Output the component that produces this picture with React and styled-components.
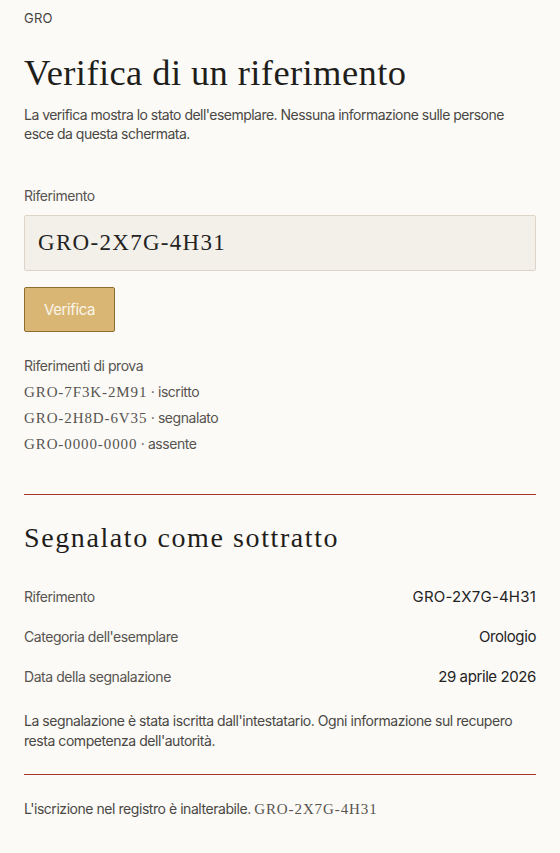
import React from "react";
import styled, { createGlobalStyle } from "styled-components";

const GlobalStyle = createGlobalStyle`
  html, body {
    margin: 0;
    padding: 0;
    background: #fbfaf7;
  }
  body {
    font-family: Inter, "Noto Sans", sans-serif;
    letter-spacing: -0.45px;
    color: #2a2926;
  }
`;

const Page = styled.div`
  padding: 10px 24px 40px;
  display: flex;
  flex-direction: column;
`;

const Brand = styled.div`
  font-size: 13px;
  color: #45433f;
  letter-spacing: 0.2px;
  line-height: 16px;
`;

const Title = styled.h1`
  font-family: "Liberation Serif", serif;
  font-weight: 400;
  font-size: 36.5px;
  line-height: 44px;
  margin: 25px 0 0;
  color: #1f1e1b;
  letter-spacing: 0.4px;
`;

const Lead = styled.p`
  font-size: 14px;
  line-height: 19px;
  color: #4a4844;
  margin: 10px 0 0;
  letter-spacing: -0.52px;
`;

const FieldLabel = styled.label`
  display: block;
  font-size: 14px;
  color: #57544f;
  margin-top: 44px;
  line-height: 18px;
`;

const Input = styled.input`
  box-sizing: border-box;
  width: 100%;
  height: 56px;
  margin-top: 10px;
  padding: 0 13px;
  background: #f3f0ea;
  border: 1px solid #ddd6c8;
  border-radius: 2px;
  font-family: "Liberation Serif", serif;
  font-size: 23px;
  letter-spacing: 1.3px;
  color: #24231f;
  outline: none;
`;

const Button = styled.button`
  align-self: flex-start;
  margin-top: 16px;
  width: 91px;
  height: 45px;
  background: #d9b674;
  border: 1px solid #8e6d2f;
  border-radius: 2px;
  color: #fbf5e9;
  font-family: Inter, sans-serif;
  font-size: 15px;
  letter-spacing: -0.4px;
`;

const SampleBlock = styled.div`
  margin-top: 20px;
  display: flex;
  flex-direction: column;
`;

const SampleTitle = styled.div`
  font-size: 14px;
  color: #57544f;
  line-height: 27px;
`;

const SampleRow = styled.div`
  font-size: 14px;
  color: #57544f;
  line-height: 26px;
`;

const Code = styled.span`
  font-family: "Liberation Serif", serif;
  font-size: 15px;
  letter-spacing: 0.9px;
  color: #57544f;
`;

const Rule = styled.div`
  height: 1px;
  background: #a5372b;
  margin-top: ${(p) => p.$mt}px;
`;

const StatusTitle = styled.h2`
  font-family: "Liberation Serif", serif;
  font-weight: 400;
  font-size: 28px;
  letter-spacing: 1.6px;
  line-height: 34px;
  margin: 26px 0 0;
  color: #1f1e1b;
`;

const Details = styled.div`
  margin-top: 32px;
  display: flex;
  flex-direction: column;
`;

const DetailRow = styled.div`
  display: flex;
  justify-content: space-between;
  align-items: baseline;
  height: 40px;
  line-height: 20px;
`;

const DetailLabel = styled.span`
  font-size: 14px;
  color: #57544f;
`;

const DetailValue = styled.span`
  font-size: 15px;
  color: #24231f;
  letter-spacing: ${(p) => (p.$code ? "0.2px" : "-0.4px")};
`;

const Note = styled.p`
  font-size: 14px;
  line-height: 20px;
  color: #4a4844;
  margin: 4px 0 0;
`;

const Footer = styled.p`
  font-size: 14px;
  color: #4a4844;
  margin: 24px 0 0;
  line-height: 20px;
`;

const samples = [
  ["GRO-7F3K-2M91", "iscritto"],
  ["GRO-2H8D-6V35", "segnalato"],
  ["GRO-0000-0000", "assente"],
];

const details = [
  ["Riferimento", "GRO-2X7G-4H31", true],
  ["Categoria dell'esemplare", "Orologio", false],
  ["Data della segnalazione", "29 aprile 2026", false],
];

export default function App() {
  return (
    <>
      <GlobalStyle />
      <Page>
        <Brand>GRO</Brand>
        <Title>Verifica di un riferimento</Title>
        <Lead>
          La verifica mostra lo stato dell'esemplare. Nessuna informazione sulle persone
          esce da questa schermata.
        </Lead>
        <FieldLabel htmlFor="ref">Riferimento</FieldLabel>
        <Input id="ref" defaultValue="GRO-2X7G-4H31" />
        <Button>Verifica</Button>
        <SampleBlock>
          <SampleTitle>Riferimenti di prova</SampleTitle>
          {samples.map(([code, state]) => (
            <SampleRow key={code}>
              <Code>{code}</Code> · {state}
            </SampleRow>
          ))}
        </SampleBlock>
        <Rule $mt={37} />
        <StatusTitle>Segnalato come sottratto</StatusTitle>
        <Details>
          {details.map(([label, value, code]) => (
            <DetailRow key={label}>
              <DetailLabel>{label}</DetailLabel>
              <DetailValue $code={code}>{value}</DetailValue>
            </DetailRow>
          ))}
        </Details>
        <Note>
          La segnalazione è stata iscritta dall'intestatario. Ogni informazione sul recupero
          resta competenza dell'autorità.
        </Note>
        <Rule $mt={23} />
        <Footer>
          L'iscrizione nel registro è inalterabile. <Code>GRO-2X7G-4H31</Code>
        </Footer>
      </Page>
    </>
  );
}
